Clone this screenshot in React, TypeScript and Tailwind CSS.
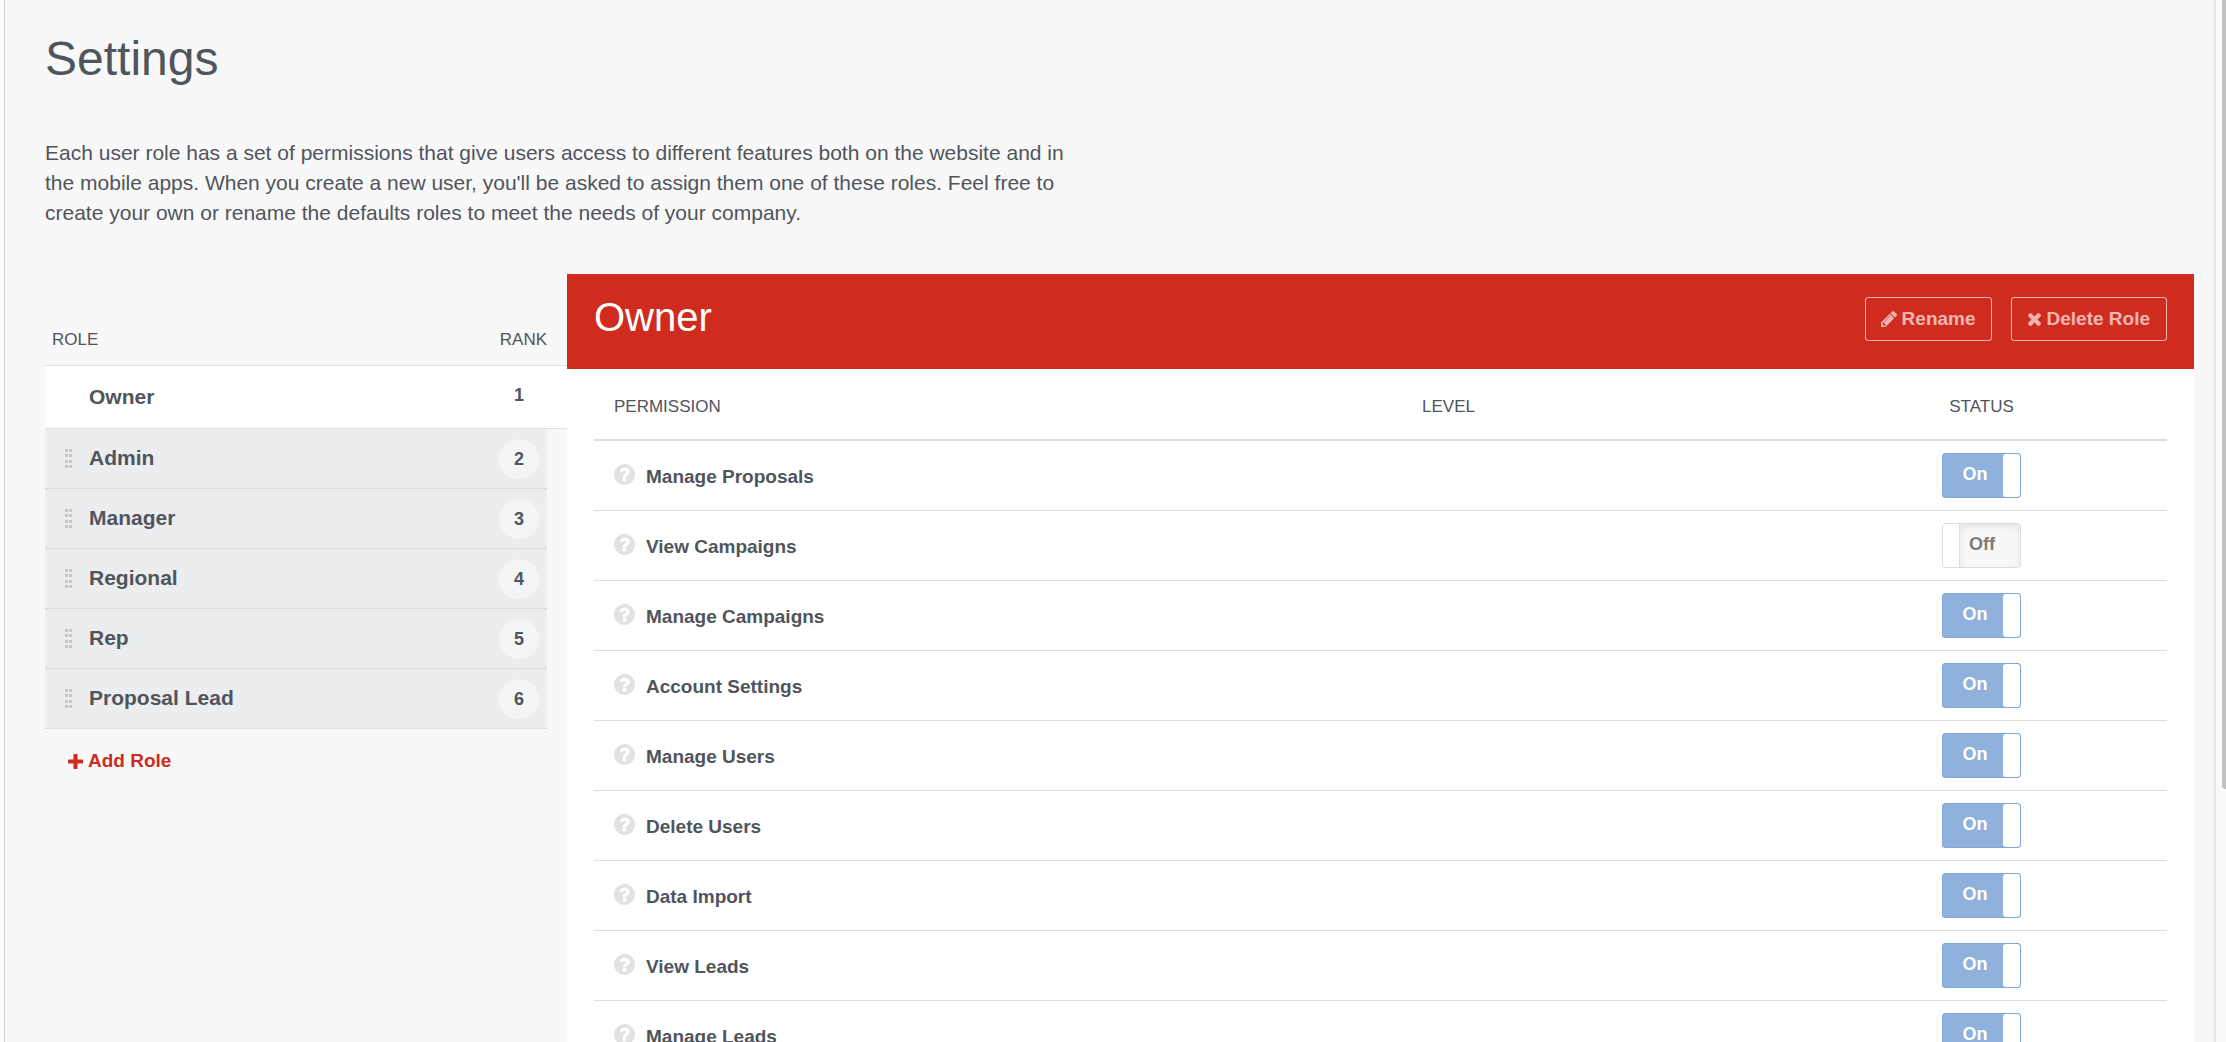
import React, { useState } from 'react';

interface Role {
    name: string;
    rank: number;
}

interface Permission {
    name: string;
    enabled: boolean;
}

const roles: Role[] = [
    { name: 'Owner', rank: 1 },
    { name: 'Admin', rank: 2 },
    { name: 'Manager', rank: 3 },
    { name: 'Regional', rank: 4 },
    { name: 'Rep', rank: 5 },
    { name: 'Proposal Lead', rank: 6 },
];

const initialPermissions: Permission[] = [
    { name: 'Manage Proposals', enabled: true },
    { name: 'View Campaigns', enabled: false },
    { name: 'Manage Campaigns', enabled: true },
    { name: 'Account Settings', enabled: true },
    { name: 'Manage Users', enabled: true },
    { name: 'Delete Users', enabled: true },
    { name: 'Data Import', enabled: true },
    { name: 'View Leads', enabled: true },
    { name: 'Manage Leads', enabled: true },
];

const PencilIcon = () => (
    <svg className="h-4 w-4" viewBox="128 149 1515 1515" fill="currentColor" aria-hidden="true">
        <path d="M491 1536l91-91-235-235-91 91v107h128v128h107zm523-928q0-22-22-22-10 0-17 7l-542 542q-7 7-7 17 0 22 22 22 10 0 17-7l542-542q7-7 7-17zm-54-192l416 416-832 832h-416v-416zm683 96q0 53-37 90l-166 166-416-416 166-165q36-38 90-38 53 0 91 38l235 234q37 39 37 91z" />
    </svg>
);

const TimesIcon = () => (
    <svg className="h-[13px] w-[13px]" viewBox="302 366 1188 1188" fill="currentColor" aria-hidden="true">
        <path d="M1490 1322q0 40-28 68l-136 136q-28 28-68 28t-68-28l-294-294-294 294q-28 28-68 28t-68-28l-136-136q-28-28-28-68t28-68l294-294-294-294q-28-28-28-68t28-68l136-136q28-28 68-28t68 28l294 294 294-294q28-28 68-28t68 28l136 136q28 28 28 68t-28 68l-294 294 294 294q28 28 28 68z" />
    </svg>
);

const PlusIcon = () => (
    <svg className="h-[15px] w-[15px]" viewBox="192 128 1408 1408" fill="currentColor" aria-hidden="true">
        <path d="M1600 736v192q0 40-28 68t-68 28h-416v416q0 40-28 68t-68 28h-192q-40 0-68-28t-28-68v-416h-416q-40 0-68-28t-28-68v-192q0-40 28-68t68-28h416v-416q0-40 28-68t68-28h192q40 0 68 28t28 68v416h416q40 0 68 28t28 68z" />
    </svg>
);

const HelpIcon = () => (
    <svg className="h-[21px] w-[21px] text-[#e1e3e3]" viewBox="128 128 1536 1536" fill="currentColor" aria-hidden="true">
        <path d="M1024 1376v-192q0-14-9-23t-23-9h-192q-14 0-23 9t-9 23v192q0 14 9 23t23 9h192q14 0 23-9t9-23zm256-672q0-88-55.5-163t-138.5-116-170-41q-243 0-371 213-15 24 8 42l132 100q7 6 19 6 16 0 25-12 53-68 86-92 34-24 86-24 48 0 85.5 26t37.5 59q0 38-20 61t-68 45q-63 28-115.5 86.5t-52.5 125.5v36q0 14 9 23t23 9h192q14 0 23-9t9-23q0-19 21.5-49.5t54.5-49.5q32-18 49-28.5t46-35 44.5-48 28-60.5 12.5-81zm384 192q0 209-103 385.5t-279.5 279.5-385.5 103-385.5-103-279.5-279.5-103-385.5 103-385.5 279.5-279.5 385.5-103 385.5 103 279.5 279.5 103 385.5z" />
    </svg>
);

const DragHandle = () => (
    <svg width="7" height="19" viewBox="0 0 7 19" fill="#c6c7c9" className="shrink-0">
        {[0, 5, 11, 16].map((y) => (
            <React.Fragment key={y}>
                <rect x="0" y={y} width="3" height="3" />
                <rect x="4" y={y} width="3" height="3" />
            </React.Fragment>
        ))}
    </svg>
);

interface ToggleProps {
    label: string;
    checked: boolean;
    onChange: () => void;
}

const Toggle: React.FC<ToggleProps> = ({ label, checked, onChange }) => (
    <label className="relative inline-block cursor-pointer align-middle text-lg font-bold leading-10">
        <input
            type="checkbox"
            className="sr-only"
            aria-label={label}
            checked={checked}
            onChange={onChange}
        />
        {checked ? (
            <span className="flex h-[45px] w-[79px] rounded-[3px] border border-[#84a7d6] bg-[#8fb1dc] text-white">
                <span className="flex-1 pl-1">On</span>
                <span className="w-[17px] rounded-[3px] bg-white" />
            </span>
        ) : (
            <span className="flex h-[45px] w-[79px] rounded-[3px] border border-[#dddddd] bg-white text-[#7b7b7b]">
                <span className="w-4 rounded-[3px] bg-white" />
                <span className="flex-1 border-l border-[#dddddd] bg-[#f8f8f8] pr-4 shadow-[inset_0_3px_7px_rgba(0,0,0,0.08)]">
                    Off
                </span>
            </span>
        )}
    </label>
);

const RoleList = () => (
    <section className="w-[522px] shrink-0">
        <div className="mt-[52px] flex h-[39px] justify-between pl-[7px] pr-5 text-[17px] leading-7">
            <span>ROLE</span>
            <span>RANK</span>
        </div>
        <ul className="text-[21px] font-bold">
            {roles.map((role, index) =>
                index === 0 ? (
                    <li key={role.name} className="flex h-16 items-center justify-between border-y border-[#dddedf] bg-white pl-11 pr-7">
                        <span>{role.name}</span>
                        <span className="h-10 w-10 text-center text-lg leading-9">{role.rank}</span>
                    </li>
                ) : (
                    <li key={role.name} className="mr-5 flex h-[60px] items-center border-b border-[#dbdcdd] bg-[#ecedef] pl-5 pr-2">
                        <DragHandle />
                        <span className="flex-1 pb-0.5 pl-[17px]">{role.name}</span>
                        <span className="h-10 w-10 rounded-full bg-[#f4f5f7] text-center text-lg leading-10">{role.rank}</span>
                    </li>
                )
            )}
        </ul>
        <button className="mt-5 flex items-center gap-[5px] pl-[23px] text-[19px] font-bold leading-6 text-[#cf2b1e]">
            <PlusIcon />
            Add Role
        </button>
    </section>
);

const App = () => {
    const [permissions, setPermissions] = useState<Permission[]>(initialPermissions);

    const toggle = (name: string) =>
        setPermissions((current) =>
            current.map((p) => (p.name === name ? { ...p, enabled: !p.enabled } : p))
        );

    return (
        <div className="flex h-screen overflow-hidden bg-[#fafafa] pl-1 font-['Liberation_Sans',Arial,sans-serif] text-[#50555c]">
            <main className="min-w-0 flex-1 border-l border-r-2 border-l-[#cfcfd3] border-r-[#e7e7e7] bg-[#f8f8f8] pl-10 pr-5">
                <h1 className="pt-[29px] text-5xl leading-[60px]">Settings</h1>
                <p className="mt-[49px] max-w-[1030px] text-[21px] leading-[30px]">
                    Each user role has a set of permissions that give users access to different features both on the website and in
                    the mobile apps. When you create a new user, you'll be asked to assign them one of these roles. Feel free to
                    create your own or rename the defaults roles to meet the needs of your company.
                </p>

                <div className="mt-[46px] flex items-start">
                    <RoleList />

                    <section className="min-w-0 flex-1 bg-white">
                        <header className="flex h-[95px] items-start justify-between bg-[#cf2b1e] px-[27px] text-white">
                            <h2 className="pt-5 text-[40px] leading-[46px]">Owner</h2>
                            <div className="flex gap-[19px] pt-[23px] text-[19px] font-bold text-white/65">
                                <button className="flex h-11 items-center gap-[5px] rounded-[3px] border border-white/65 px-[15px]">
                                    <PencilIcon />
                                    Rename
                                </button>
                                <button className="flex h-11 items-center gap-[6px] rounded-[3px] border border-white/65 px-4">
                                    <TimesIcon />
                                    Delete Role
                                </button>
                            </div>
                        </header>

                        <div className="px-[27px]">
                            <table className="w-full table-fixed border-separate border-spacing-0">
                                <thead>
                                    <tr className="h-[72px] text-[17px]">
                                        <th className="border-b-2 border-[#dcdcdc] px-5 pt-1.5 text-left font-normal">PERMISSION</th>
                                        <th className="w-[394px] border-b-2 border-[#dcdcdc] px-5 pt-1.5 text-left font-normal">LEVEL</th>
                                        <th className="w-[371px] border-b-2 border-[#dcdcdc] pt-1.5 text-center font-normal">STATUS</th>
                                    </tr>
                                </thead>
                                <tbody>
                                    {permissions.map((permission) => (
                                        <tr key={permission.name} className="h-[70px]">
                                            <td className="border-b border-[#dcdcdc] px-5 pt-0.5">
                                                <div className="flex items-start gap-[11px] text-[19px] font-bold leading-[26px]">
                                                    <HelpIcon />
                                                    {permission.name}
                                                </div>
                                            </td>
                                            <td className="border-b border-[#dcdcdc]" />
                                            <td className="border-b border-[#dcdcdc] text-center">
                                                <Toggle
                                                    label={permission.name}
                                                    checked={permission.enabled}
                                                    onChange={() => toggle(permission.name)}
                                                />
                                            </td>
                                        </tr>
                                    ))}
                                </tbody>
                            </table>
                        </div>
                    </section>
                </div>
            </main>

            {/* scroll indicator */}
            <div className="ml-[6px] w-1">
                <div className="h-[789px] rounded-bl bg-[#c1c1c1]" />
            </div>
        </div>
    );
};

export default App;
